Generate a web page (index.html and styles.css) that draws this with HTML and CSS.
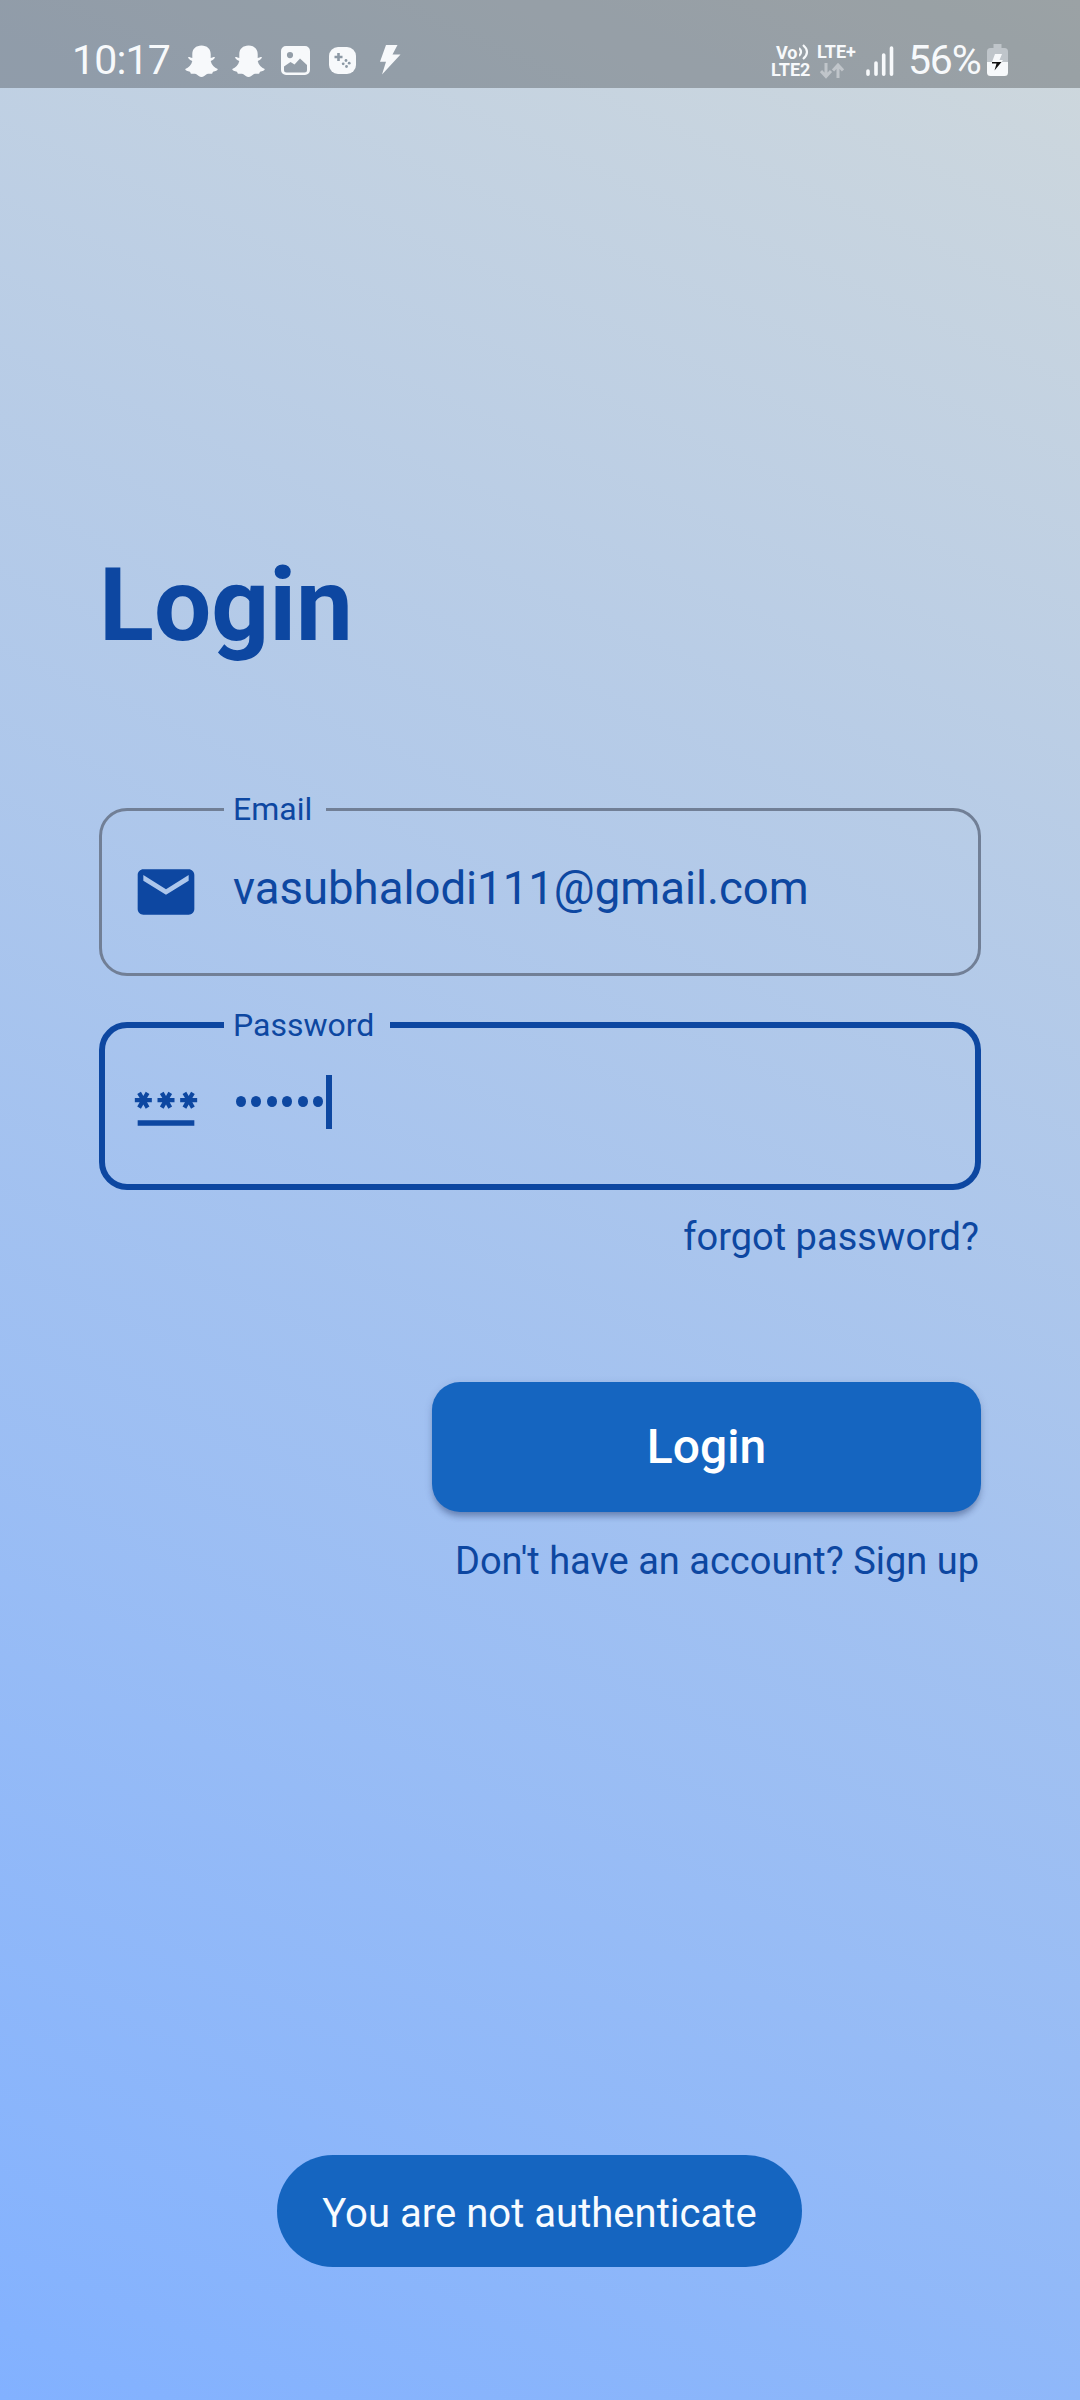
FILE: index.html
```html
<!DOCTYPE html>
<html lang="en">
<head>
<meta charset="utf-8">
<title>Login</title>
<link rel="stylesheet" href="styles.css">
</head>
<body>
<div class="screen">
  <header class="status">
    <span class="clock">10:17</span>
    <div class="notices">
      <svg width="33" height="33" viewBox="0 0 33 33"><path class="fill" d="M16.500 0.500C11 .5 7.300 4 7.300 9v4C6 12.700 4.500 11.800 3.300 12c-.8.800 1.200 2.800 4 4C6.500 20 3.500 22.800.300 24c-.5 1.300 2 2.300 4.700 2.800.5.800.4 1.800 1.200 1.900 1.500.100 3-.4 4.800.4C13 30.500 14.500 32 16.500 32s3.500-1.500 5.500-2.900c1.800-.8 3.300-.3 4.800-.4.8-.1.700-1.100 1.200-1.900 2.700-.5 5.200-1.500 4.700-2.800-3.200-1.200-6.200-4-7-8 2.800-1.200 4.800-3.200 4-4-1.200-.2-2.700.7-4 1V9c0-5-3.700-8.500-9.200-8.500z"/></svg>
      <svg width="33" height="33" viewBox="0 0 33 33"><path class="fill" d="M16.500 0.500C11 .5 7.300 4 7.300 9v4C6 12.700 4.500 11.800 3.300 12c-.8.800 1.200 2.800 4 4C6.500 20 3.500 22.800.300 24c-.5 1.300 2 2.300 4.700 2.800.5.800.4 1.800 1.200 1.900 1.500.100 3-.4 4.800.4C13 30.500 14.500 32 16.500 32s3.500-1.500 5.500-2.900c1.800-.8 3.300-.3 4.800-.4.8-.1.700-1.100 1.200-1.900 2.700-.5 5.200-1.500 4.700-2.800-3.200-1.200-6.200-4-7-8 2.800-1.200 4.800-3.200 4-4-1.200-.2-2.700.7-4 1V9c0-5-3.700-8.500-9.200-8.500z"/></svg>
      <svg class="photo" width="29" height="29" viewBox="0 0 29 29"><path class="fill" fill-rule="evenodd" d="M5 0h19a5 5 0 0 1 5 5v19a5 5 0 0 1-5 5H5a5 5 0 0 1-5-5V5a5 5 0 0 1 5-5zM9 6a3 3 0 1 0 0 6.200A3 3 0 0 0 9 6zM3 20.500V24a2.500 2.500 0 0 0 2.500 2.500h18A2.500 2.500 0 0 0 26 24v-5l-7-6.500-5.500 6-4-2.500z"/></svg>
      <svg class="game" width="27" height="27" viewBox="0 0 27 27"><rect class="fill" width="27" height="27" rx="9"/><path class="pad" d="M9.500 6v8M5.500 10h8"/><g class="dots"><circle cx="17" cy="13.500" r="1.400"/><circle cx="14.200" cy="16.800" r="1.400"/><circle cx="20.200" cy="16.200" r="1.400"/><circle cx="17.500" cy="19.500" r="1.400"/></g></svg>
      <svg class="bolt" width="21" height="30" viewBox="0 0 21 30"><path class="fill" d="M6 0h11.500l-5 9.500H20.500L2 29.500l4-12.700H0z"/></svg>
    </div>
    <div class="system">
      <div class="volte"><span class="vo">Vo<svg width="11" height="16" viewBox="0 0 11 16"><path d="M0 4q4 4 0 8M4 1q8 7 0 14"/></svg></span><span>LTE2</span></div>
      <div class="lte"><span>LTE+</span>
        <svg width="24" height="16" viewBox="0 0 24 16"><path d="M6 0v13M1 8l5 5.500L11 8M18 15V2M13 7.500L18 2l5 5.500"/></svg>
      </div>
      <svg class="signal" width="28" height="30" viewBox="0 0 28 30"><path d="M2 25v3.200M10 17v11.200M17.700 9v19.200M25.500 2v26.200"/></svg>
      <span class="percent">56%</span>
      <svg class="battery" width="21" height="32" viewBox="0 0 21 32"><path class="level-empty" d="M6.500 0h8v4H17.500A3.500 3.500 0 0 1 21 7.500V18H0V7.500A3.500 3.500 0 0 1 3.500 4h3z"/><path class="fill" d="M0 18h21v10.500a3.500 3.500 0 0 1-3.500 3.500h-14A3.500 3.500 0 0 1 0 28.500z"/><path class="fill" d="M8 10h7l-2.500 6H16l-1.500 2H5z"/><path class="charge" d="M5 18h9.500L7.500 26.500l2-7H5z"/></svg>
    </div>
  </header>

  <main class="form">
    <h1>Login</h1>
    <fieldset class="field email">
      <legend>Email</legend>
      <svg width="68" height="68" viewBox="0 0 24 24"><path d="M20 4H4c-1.100 0-1.990.9-1.990 2L2 18c0 1.100.9 2 2 2h16c1.100 0 2-.9 2-2V6c0-1.100-.9-2-2-2zm0 4l-8 5-8-5V6l8 5 8-5v2z"/></svg>
      <span class="value">vasubhalodi111@gmail.com</span>
    </fieldset>
    <fieldset class="field password">
      <legend>Password</legend>
      <svg width="68" height="68" viewBox="0 0 24 24"><path d="M2 17h20v2H2v-2zm1.150-4.050L4 11.470l.85 1.480 1.300-.75-.85-1.480H7v-1.500H5.300l.85-1.470L4.850 7 4 8.470 3.150 7l-1.300.75.85 1.470H1v1.500h1.700l-.85 1.480 1.300.75zm6.700-.75l1.300.75.850-1.480.85 1.480 1.300-.75-.85-1.480H15v-1.500h-1.700l.85-1.470-1.300-.75L12 8.470 11.150 7l-1.300.75.85 1.470H9v1.500h1.700l-.85 1.480zM23 9.220h-1.700l.85-1.470-1.300-.75L20 8.470 19.150 7l-1.300.75.85 1.470H17v1.500h1.700l-.85 1.480 1.300.75.850-1.480.85 1.480 1.300-.75-.85-1.480H23v-1.500z"/></svg>
      <span class="secret"><i></i><i></i><i></i><i></i><i></i><i></i></span><span class="caret"></span>
    </fieldset>
    <a class="forgot">forgot password?</a>
    <button class="submit">Login</button>
    <a class="signup">Don't have an account? Sign up</a>
  </main>

  <div class="toast">You are not authenticate</div>
</div>
</body>
</html>
```
FILE: styles.css
```css
* { box-sizing: border-box; }
body { margin: 0; font-family: Roboto, "Liberation Sans", sans-serif; color: #0d47a1; }
.screen {
  width: 1080px; height: 2400px; overflow: hidden;
  display: flex; flex-direction: column;
  background: linear-gradient(204.23deg, #cfd8dc, #82b1ff);
}
svg { display: block; flex: none; }
.fill { fill: #f7f9fb; }

.status {
  height: 88px; flex: none; padding: 0 72px 0 72px;
  display: flex; align-items: flex-start;
  background: rgba(0, 0, 0, .25); color: #f7f9fb; white-space: nowrap;
}
.clock { width: 113px; font-size: 41px; line-height: 48px; padding-top: 36px; letter-spacing: -.8px; }
.notices { display: flex; gap: 14px; padding-top: 45px; }
.photo { margin: 1px 0 0 2px; }
.game { margin: 2px 0 0 5px; }
.bolt { margin-left: 10px; }
.pad { stroke: #8c99a5; stroke-width: 2.600; }
.dots { fill: #8c99a5; }

.system { margin-left: auto; display: flex; align-items: flex-start; }
.volte, .lte { font-size: 18px; line-height: 17px; font-weight: 700; display: flex; flex-direction: column; }
.volte { width: 46px; padding-top: 44px; }
.vo { display: flex; padding-left: 5px; }
.vo svg { fill: none; stroke: #f7f9fb; stroke-width: 2.200; margin-left: 1px; }
.lte { width: 49px; padding-top: 43px; }
.lte svg { margin: 3px 0 0 3px; fill: none; stroke: #c0c5ca; stroke-width: 3; }
.signal { margin-top: 46px; fill: none; stroke: #f7f9fb; stroke-width: 3.600; stroke-linecap: round; }
.percent { width: 79px; margin-left: 14px; font-size: 41px; line-height: 48px; padding-top: 36px; letter-spacing: -1.200px; }
.battery { margin-top: 44px; }
.level-empty { fill: #bfc5ca; }
.charge { fill: #111; }

.form { width: 882px; margin-left: 99px; flex: 1; display: flex; flex-direction: column; }
h1 { margin: 458px 0 0; font-size: 101.500px; line-height: 120px; font-weight: 700; }
.field {
  margin: 0; min-width: 0; padding: 0 30px; border-radius: 28px;
  display: flex; align-items: flex-start;
}
.email { height: 184px; margin-top: 126px; border: 3px solid #717f96; }
.password { height: 183px; margin-top: 31px; border: 6px solid #0d47a1; padding: 0 27px; }
legend { font-size: 32px; line-height: 36px; padding: 0 14px 0 9px; margin-left: 92px; }
.email legend { line-height: 34px; }
.password legend { padding-right: 16px; }
.field svg { fill: #0d47a1; }
.email svg { margin-top: 32px; }
.email .value { margin: 33px 0 0 33px; font-size: 45.500px; line-height: 60px; }
.password svg { margin-top: 29px; }
.secret { display: flex; gap: 5.400px; margin: 53px 0 0 36px; }
.secret i { width: 10px; height: 11px; border-radius: 50%; background: #0d47a1; }
.caret { width: 6px; height: 54px; margin: 32px 0 0 3px; background: #0d47a1; }
.forgot, .signup { align-self: flex-end; margin-right: 2px; font-size: 38px; line-height: 44px; white-space: nowrap; }
.forgot { margin-top: 25px; }
.submit {
  align-self: flex-end; width: 549px; height: 130px; margin-top: 123px; padding: 0;
  border: 0; border-radius: 28px; background: #1565c0; color: #fff;
  font: 500 48px/130px Roboto, "Liberation Sans", sans-serif;
  box-shadow: 0 6px 6px -2px rgba(40, 60, 110, .4), 0 2px 8px rgba(40, 60, 110, .15);
}
.signup { margin-top: 27px; }
.toast {
  align-self: center; flex: none; height: 112px; width: 525px; margin: 0 1px 133px 0;
  border-radius: 56px; background: #1565c0; color: #f7fbff;
  font-size: 40.100px; line-height: 118px; text-align: center; white-space: nowrap;
}
```
